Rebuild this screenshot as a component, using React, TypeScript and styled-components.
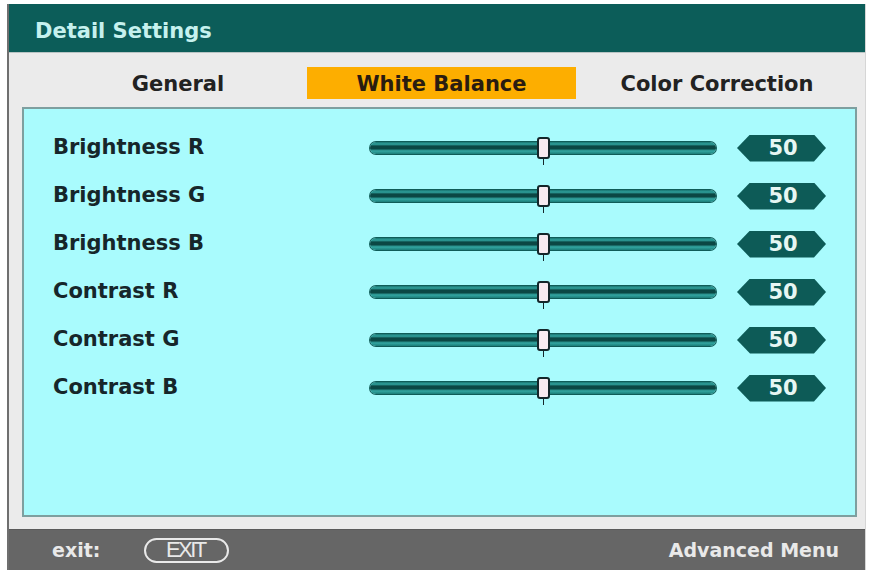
import React from "react";
import styled, { createGlobalStyle } from "styled-components";

const Global = createGlobalStyle`
  html, body { margin: 0; padding: 0; background: #ffffff; }
  body { font-family: "DejaVu Sans", "Liberation Sans", sans-serif; }
`;

const Frame = styled.div`
  margin: 4px 0 0 7px;
  width: 859px;
  height: 566px;
  display: flex;
  flex-direction: column;
  box-sizing: border-box;
  border-left: 2px solid #6f6f6f;
  border-right: 1px solid #d6d6d6;
`;

const Header = styled.div`
  height: 48px;
  background: #0c5d59;
  color: #c6f1ee;
  font-weight: 700;
  font-size: 21px;
  display: flex;
  align-items: center;
  padding-left: 26px;
  padding-top: 5px;
  box-sizing: border-box;
`;

const Body = styled.div`
  flex: 1;
  background: #ebebeb;
  display: flex;
  flex-direction: column;
  padding: 0 8px 12px 13px;
  border-top: 1px solid #b9c4c4;
`;

const TabRow = styled.div`
  display: grid;
  grid-template-columns: 258px 269px 282px;
  padding: 14px 0 8px 27px;
`;

const Tab = styled.div<{ $active?: boolean }>`
  height: 32px;
  display: flex;
  align-items: center;
  justify-content: center;
  font-size: 21px;
  font-weight: 700;
  color: ${(p) => (p.$active ? "#2a1c10" : "#222")};
  background: ${(p) => (p.$active ? "#fdae00" : "transparent")};
  padding-top: 2px;
  box-sizing: border-box;
`;

const Panel = styled.div`
  flex: 1;
  background: #a9fbfd;
  border: 2px solid #7e9f9f;
  padding: 15px 0 0 29px;
  display: flex;
  flex-direction: column;
`;

const Row = styled.div`
  height: 48px;
  display: grid;
  grid-template-columns: 296px 346px 89px;
  column-gap: 21px;
  align-items: center;
`;

const Label = styled.div`
  font-size: 21px;
  font-weight: 700;
  color: #16262a;
  padding-bottom: 2px;
`;

const Track = styled.div`
  position: relative;
  height: 12px;
  border-radius: 6px;
  background: linear-gradient(
    to bottom,
    #1a7571 0%,
    #2fa29d 18%,
    #0b4744 34%,
    #0b4744 56%,
    #33a8a3 74%,
    #1b7c78 100%
  );
  box-shadow: 0 0 0 1px #0f5c58;
`;

const Thumb = styled.div`
  position: absolute;
  top: -5px;
  width: 9px;
  height: 18px;
  margin-left: -6px;
  background: #f7eaf0;
  border: 2px solid #14262a;
  border-radius: 3px;
  &::after {
    content: "";
    position: absolute;
    left: 4px;
    top: 20px;
    width: 1px;
    height: 6px;
    background: #14262a;
  }
`;

const Badge = styled.div`
  height: 27px;
  background: #0d5b57;
  clip-path: polygon(0 50%, 13px 0, calc(100% - 12px) 0, 100% 50%, calc(100% - 12px) 100%, 13px 100%);
  display: flex;
  align-items: center;
  justify-content: center;
  color: #e7f6f3;
  font-size: 21px;
  font-weight: 700;
  padding-left: 3px;
`;

const Footer = styled.div`
  height: 41px;
  background: #666666;
  display: flex;
  align-items: center;
  padding: 0 26px 0 43px;
  color: #e9e9e9;
  border-top: 1px solid #5a5a5a;
  box-sizing: border-box;
`;

const ExitLabel = styled.span`
  font-size: 19px;
  font-weight: 700;
  margin-right: 44px;
`;

const ExitPill = styled.span`
  width: 85px;
  height: 25px;
  box-sizing: border-box;
  border: 2px solid #e9e9e9;
  border-radius: 13px;
  display: flex;
  align-items: center;
  justify-content: center;
  font-family: "Liberation Sans", sans-serif;
  font-size: 22px;
  letter-spacing: -2.5px;
  padding-right: 3px;
`;

const FooterRight = styled.span`
  margin-left: auto;
  font-size: 19px;
  font-weight: 700;
`;

const rows = [
  { label: "Brightness R", value: 50 },
  { label: "Brightness G", value: 50 },
  { label: "Brightness B", value: 50 },
  { label: "Contrast R", value: 50 },
  { label: "Contrast G", value: 50 },
  { label: "Contrast B", value: 50 },
];

export default function App() {
  return (
    <>
      <Global />
      <Frame>
        <Header>Detail Settings</Header>
        <Body>
          <TabRow>
            <Tab>General</Tab>
            <Tab $active>White Balance</Tab>
            <Tab>Color Correction</Tab>
          </TabRow>
          <Panel>
            {rows.map((r) => (
              <Row key={r.label}>
                <Label>{r.label}</Label>
                <Track>
                  <Thumb style={{ left: `${r.value}%` }} />
                </Track>
                <Badge>{r.value}</Badge>
              </Row>
            ))}
          </Panel>
        </Body>
        <Footer>
          <ExitLabel>exit:</ExitLabel>
          <ExitPill>EXIT</ExitPill>
          <FooterRight>Advanced Menu</FooterRight>
        </Footer>
      </Frame>
    </>
  );
}
